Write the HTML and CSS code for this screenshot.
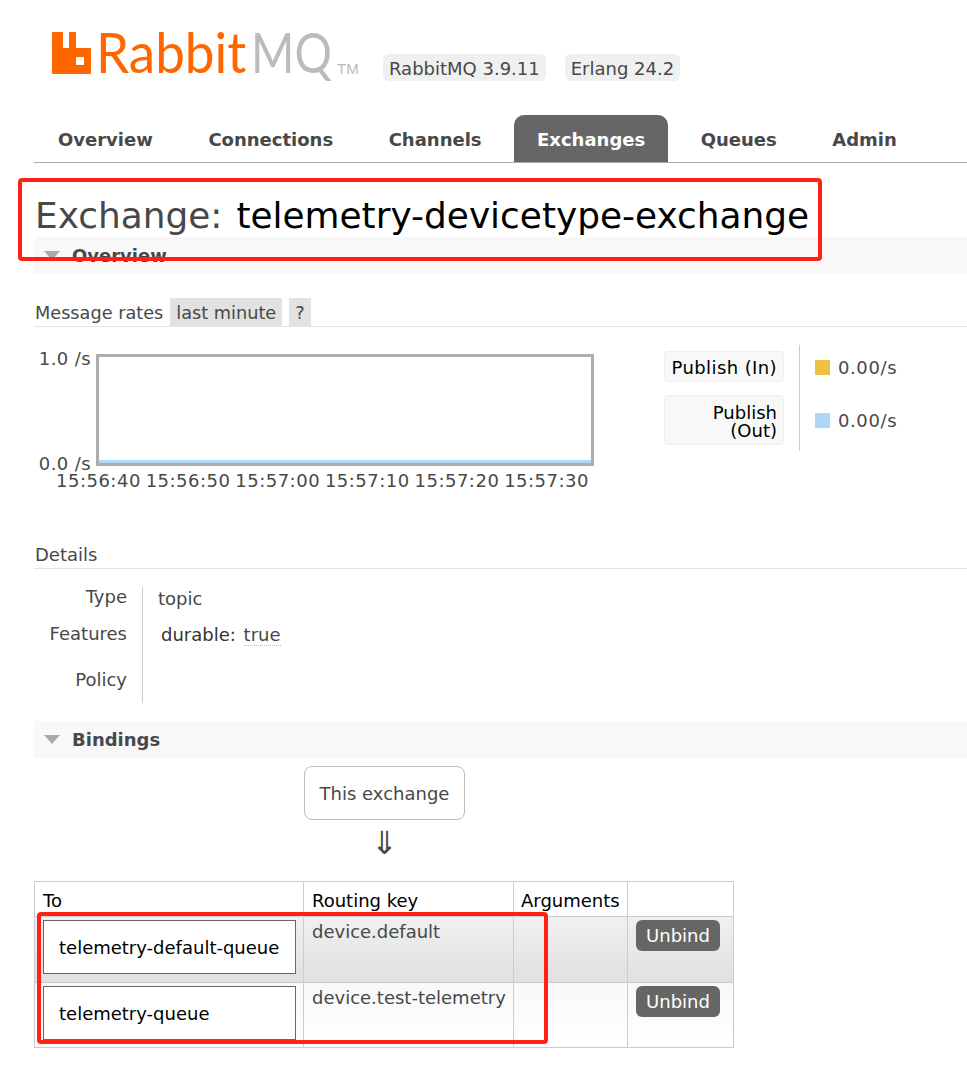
FILE: index.html
```html
<!DOCTYPE html>
<html lang="en">
<head>
<meta charset="utf-8">
<title>RabbitMQ Management</title>
<link rel="stylesheet" href="styles.css">
</head>
<body>
<div class="page">
  <header class="header">
    <div class="logo">
      <svg class="logo-mark" width="39" height="42" viewBox="0 0 39 42"><path fill="#f60" fill-rule="evenodd" d="M1 0h9a1 1 0 0 1 1 1v15h6V1a1 1 0 0 1 1-1h5a1 1 0 0 1 1 1v15h14a1 1 0 0 1 1 1v24a1 1 0 0 1-1 1H1a1 1 0 0 1-1-1V1a1 1 0 0 1 1-1zM24 26v6a1 1 0 0 0 1 1h6a1 1 0 0 0 1-1v-6a1 1 0 0 0-1-1h-6a1 1 0 0 0-1 1z"/></svg>
      <span class="logo-rabbit">Rabbit</span><span class="logo-mq">MQ</span><span class="logo-tm">TM</span>
    </div>
    <div class="versions">
      <span class="version">RabbitMQ 3.9.11</span>
      <span class="version">Erlang 24.2</span>
    </div>
  </header>
  <nav class="tabs">
    <a class="tab">Overview</a>
    <a class="tab">Connections</a>
    <a class="tab">Channels</a>
    <a class="tab active">Exchanges</a>
    <a class="tab">Queues</a>
    <a class="tab">Admin</a>
  </nav>
  <h1 class="title">Exchange: <b>telemetry-devicetype-exchange</b></h1>
  <h2 class="section-bar"><span class="caret"></span>Overview</h2>
  <div class="rates-head">
    <span>Message rates</span><span class="pill">last minute</span><span class="pill help">?</span>
  </div>
  <div class="chart-row">
    <div class="chart">
      <div class="chart-main">
        <div class="y-axis"><span>1.0 /s</span><span>0.0 /s</span></div>
        <div class="plot"><div class="plot-line"></div></div>
      </div>
      <div class="x-axis"><span>15:56:40</span><span>15:56:50</span><span>15:57:00</span><span>15:57:10</span><span>15:57:20</span><span>15:57:30</span></div>
    </div>
    <div class="legend">
      <div class="legend-labels">
        <div class="legend-label">Publish (In)</div>
        <div class="legend-label tall">Publish<br>(Out)</div>
      </div>
      <div class="legend-values">
        <div class="legend-value"><span class="swatch yellow"></span>0.00/s</div>
        <div class="legend-value"><span class="swatch blue"></span>0.00/s</div>
      </div>
    </div>
  </div>
  <div class="details-head">Details</div>
  <div class="details">
    <div class="details-keys"><div class="k-type">Type</div><div>Features</div><div class="policy">Policy</div></div>
    <div class="details-values">
      <div>topic</div>
      <div class="feature"><span class="feature-key">durable:</span> <abbr class="feature-val">true</abbr></div>
    </div>
  </div>
  <h2 class="section-bar bindings"><span class="caret"></span>Bindings</h2>
  <div class="flow">
    <div class="this-box">This exchange</div>
    <div class="arrow">&#8659;</div>
  </div>
  <table class="bind-table">
    <thead>
      <tr><th class="c-to">To</th><th class="c-key">Routing key</th><th class="c-arg">Arguments</th><th class="c-act"></th></tr>
    </thead>
    <tbody>
      <tr class="alt1">
        <td class="c-to"><div class="queue">telemetry-default-queue</div></td>
        <td>device.default</td><td></td>
        <td class="c-act"><button class="unbind">Unbind</button></td>
      </tr>
      <tr class="alt2">
        <td class="c-to"><div class="queue">telemetry-queue</div></td>
        <td>device.test-telemetry</td><td></td>
        <td class="c-act"><button class="unbind">Unbind</button></td>
      </tr>
    </tbody>
  </table>
</div>
<div class="mark mark-title"></div>
<div class="mark mark-table"></div>
</body>
</html>
```
FILE: styles.css
```css
* { box-sizing: border-box; }
html, body { margin: 0; padding: 0; background: #fff; }
body { width: 967px; height: 1091px; overflow: hidden; position: relative; font-family: "DejaVu Sans", sans-serif; font-size: 18px; color: #484848; }
.page { padding-left: 34px; }
.header { height: 115px; display: flex; align-items: flex-start; }
.logo { display: flex; align-items: flex-start; margin: 32px 0 0 18px; height: 50px; width: 331px; flex: none; }
.logo-mark { flex: none; margin-right: 5px; }
.logo-rabbit, .logo-mq { display: inline-block; font-family: "Lato", sans-serif; font-size: 57px; line-height: 42px; margin-top: -2px; color: #f60; transform-origin: left center; white-space: nowrap; }
.logo-rabbit { width: 155px; transform: scaleX(.93); }
.logo-mq { width: 86px; color: #bbb; transform: scaleX(.82); }
.logo-tm { font-family: "Liberation Sans", sans-serif; font-size: 15px; line-height: 14px; color: #bbb; margin: 30px 0 0 0; }
.versions { display: flex; gap: 19px; margin-top: 54px; }
.version { background: #f0f0f0; border-radius: 6px; height: 27px; line-height: 29px; padding: 0 6px; }
.tabs { display: flex; gap: 9.5px; height: 48px; border-bottom: 1px solid #aaa; }
.tab { display: block; padding: 14px 23px 0; height: 47px; font-weight: bold; font-size: 18px; color: #484848; white-space: nowrap; }
.tab:first-child { padding-left: 24px; }
.tab.active { background: #666; color: #fff; border-radius: 10px 10px 0 0; }
.title { margin: 0; height: 74px; padding: 29px 0 0 1px; font-weight: normal; font-size: 35.9px; line-height: 48px; color: #484848; white-space: nowrap; }
.title b { font-weight: normal; color: #000; margin-left: 2.5px; }
.section-bar { margin: 0; height: 37px; background: #f8f8f8; font-size: 18px; font-weight: bold; line-height: 38px; color: #484848; display: flex; align-items: center; }
.caret { width: 0; height: 0; border: 8.5px solid transparent; border-top: 9px solid #aaa; border-bottom: 0; margin: 0 12px 0 10px; }
.rates-head { margin-top: 24px; height: 29px; border-bottom: 1px solid #e4e4e4; display: flex; align-items: stretch; line-height: 30px; padding-left: 1px; font-size: 17.7px; }
.pill { background: #e2e2e2; padding: 0 6px; margin-left: 7px; }
.chart-row { display: flex; margin-top: 18px; height: 145px; }
.chart { width: 566px; }
.chart-main { display: flex; height: 111px; margin-top: 9px; }
.y-axis { width: 62px; display: flex; flex-direction: column; justify-content: space-between; align-items: flex-end; padding: 0 5px 0 0; line-height: 20px; margin-top: -5px; height: 125px; flex: none; letter-spacing: .4px; }
.plot { width: 498px; height: 112px; border: 3px solid #adadad; flex: none; position: relative; }
.plot-line { position: absolute; left: 0; right: 0; bottom: 0; height: 3px; background: #aed6f5; }
.x-axis { display: flex; margin-left: 22px; line-height: 20px; margin-top: 6px; justify-content: space-between; width: 533px; letter-spacing: .5px; }
.legend { display: flex; margin-left: 64px; height: 106px; }
.legend-labels { width: 136px; flex: none; border-right: 1px solid #ccc; padding-top: 6px; display: flex; flex-direction: column; gap: 13px; color: #000; }
.legend-label { width: 120px; background: #f8f8f8; border: 1px solid #eee; border-radius: 4px; text-align: right; padding: 6px 6px 0 0; line-height: 20px; height: 31px; letter-spacing: .4px; white-space: nowrap; }
.legend-label.tall { height: 50px; padding-top: 8px; line-height: 18px; letter-spacing: 0; }
.legend-values { padding: 11px 0 0 15px; display: flex; flex-direction: column; gap: 31px; }
.legend-value { display: flex; align-items: center; height: 22px; gap: 8px; letter-spacing: .6px; }
.swatch { width: 15px; height: 15px; flex: none; }
.yellow { background: #edc240; }
.blue { background: #afd8f8; }
.details-head { margin-top: 52px; height: 27px; line-height: 26px; padding-left: 1px; border-bottom: 1px solid #e4e4e4; }
.details { display: flex; margin-top: 18px; height: 116px; }
.details-keys { width: 109px; border-right: 1px solid #ccc; text-align: right; padding-right: 15px; }
.details-keys div { height: 36px; line-height: 20px; }
.details-keys .k-type { height: 37px; }
.details-keys .policy { margin-top: 10px; }
.details-values { padding: 1px 0 0 15px; }
.details-values > div { height: 36px; line-height: 22px; }
.feature { padding-left: 3px; }
.feature-key { color: #333; }
.feature-val { border-bottom: 1px dotted #bbb; text-decoration: none; margin-left: 2px; }
.bindings { margin-top: 18px; }
.flow { width: 700px; height: 123px; padding-top: 8px; display: flex; flex-direction: column; margin-left: 270px; }
.this-box { width: 161px; height: 54px; border: 1px solid #bbb; border-radius: 8px; text-align: center; line-height: 54px; }
.arrow { width: 161px; text-align: center; font-size: 32px; line-height: 44px; margin-top: 1px; }
.bind-table { border-collapse: collapse; width: 700px; table-layout: fixed; }
.bind-table th, .bind-table td { border: 1px solid #ccc; padding: 0 8px; vertical-align: top; text-align: left; font-weight: normal; white-space: nowrap; }
.bind-table th { color: #000; height: 35px; line-height: 20px; padding-top: 9px; }
.bind-table td { height: 66px; padding-top: 5px; line-height: 20px; }
.alt2 td { height: 65px; }
.c-to { width: 269px; }
.c-key { width: 210px; }
.c-arg { width: 114px; }
.bind-table th.c-arg { padding-left: 7px; }
.bind-table td.c-to, .bind-table td.c-act { padding-top: 3px; }
.alt1 { background: linear-gradient(#f0f0f0, #e0e0e0); }
.alt2 { background: linear-gradient(#f8f8f8, #fff); }
.queue { width: 253px; height: 54px; background: #fff; border: 1px solid #666; color: #000; line-height: 54px; padding-left: 15px; white-space: nowrap; }
.unbind { display: block; width: 84px; height: 31px; border: 0; border-radius: 6px; background: #666; color: #fff; font: 18px "DejaVu Sans", sans-serif; padding: 0; }
.mark { position: absolute; border: 4px solid #ff2016; border-radius: 4px; }
.mark-title { left: 18px; top: 178px; width: 804px; height: 83px; }
.mark-table { left: 37px; top: 912px; width: 511px; height: 132px; }
```
